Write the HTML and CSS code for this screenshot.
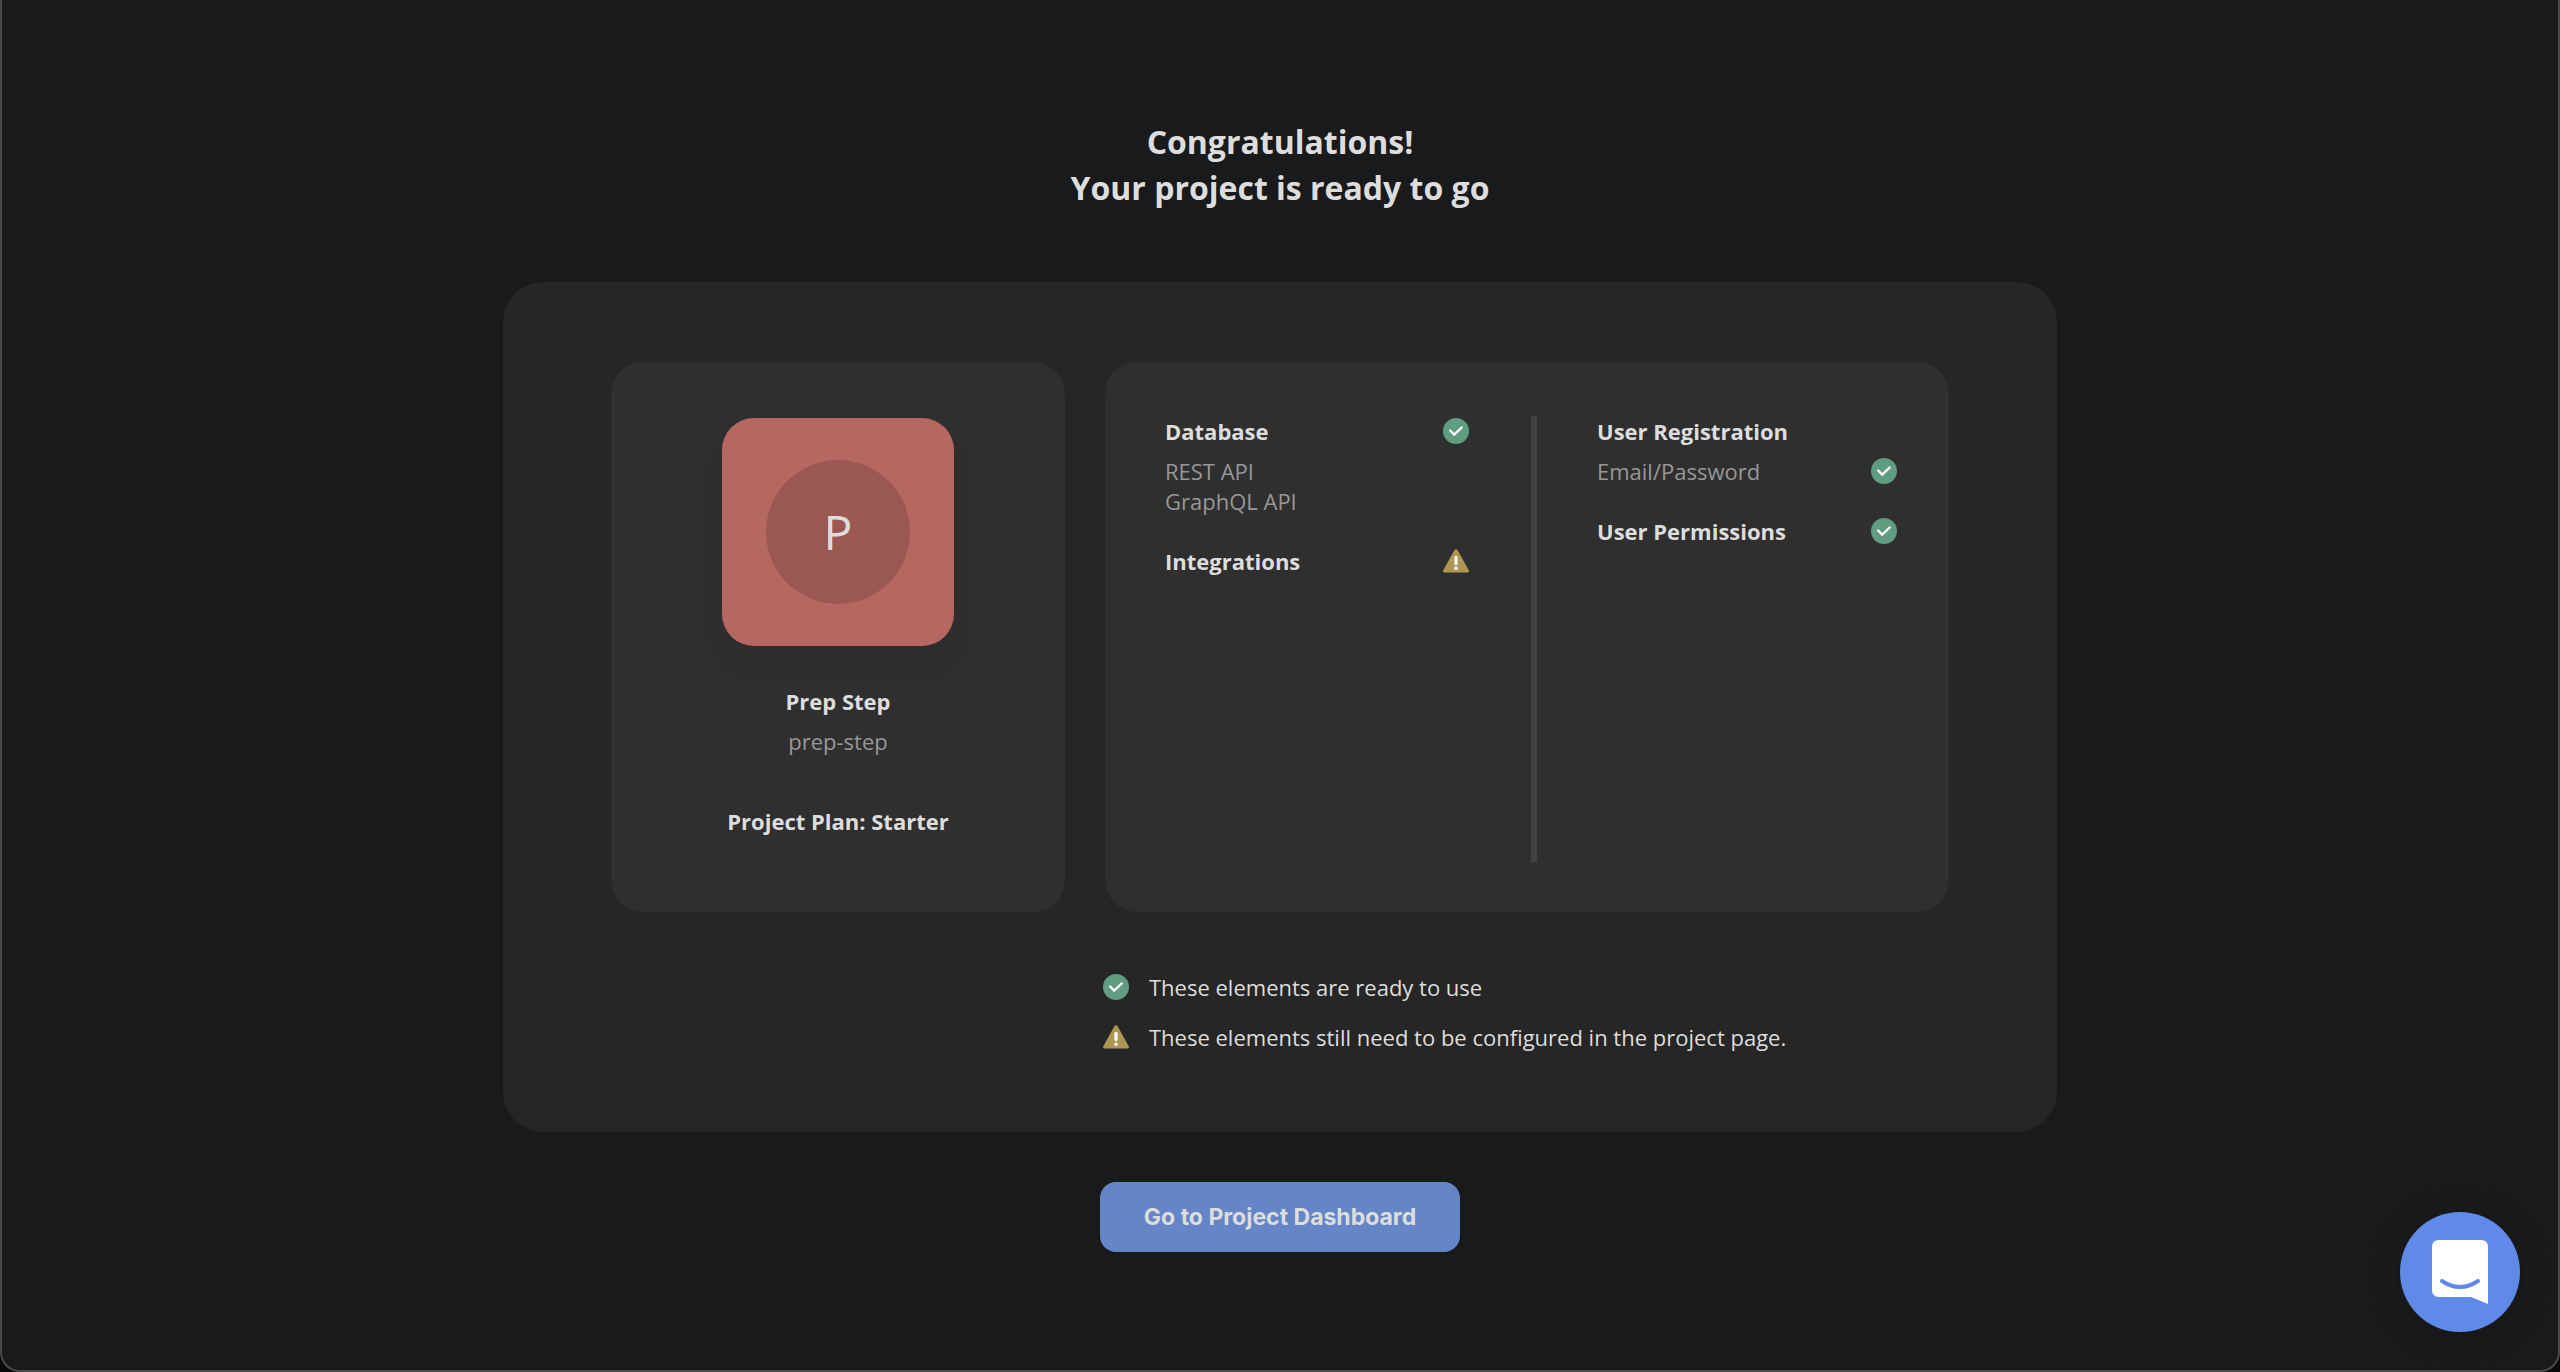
FILE: index.html
```html
<!DOCTYPE html>
<html lang="en">
<head>
  <meta charset="utf-8">
  <meta name="viewport" content="width=device-width, initial-scale=1">
  <title>Project ready</title>
  <link rel="stylesheet" href="styles.css">
</head>
<body>
  <svg class="sprite" aria-hidden="true">
    <symbol id="icon-ready" viewBox="0 0 26 26">
      <circle cx="13" cy="13" r="13" fill="#609d80"/>
      <path d="M7.2 12.4 11.2 16.6 18.8 9.4" fill="none" stroke="#fff" stroke-width="2.2" stroke-linecap="round" stroke-linejoin="miter"/>
    </symbol>
    <symbol id="icon-pending" viewBox="0 0 26 26">
      <path d="M11.5 2.1Q13 .3 14.5 2.1L25.7 22.2Q26.4 24.3 24.4 24.5H1.6Q-.4 24.3.3 22.2Z" fill="#b09653"/>
      <path d="M13 9.3V15.6" stroke="#fff" stroke-width="3.2" stroke-linecap="round"/>
      <circle cx="13" cy="20.3" r="1.7" fill="#fff"/>
    </symbol>
  </svg>

  <div class="window">
    <main class="page">
      <h1 class="title">Congratulations!<br>Your project is ready to go</h1>

      <section class="summary">
        <div class="cards">
          <article class="card project">
            <div class="avatar"><span class="avatar-letter">P</span></div>
            <h2 class="label">Prep Step</h2>
            <p class="detail">prep-step</p>
            <p class="label plan">Project Plan: Starter</p>
          </article>

          <article class="card features">
            <div class="column">
              <div class="feature">
                <div class="row">
                  <h2 class="label">Database</h2>
                  <svg class="icon" role="img" aria-label="Ready"><use href="#icon-ready"/></svg>
                </div>
                <p class="detail">REST API</p>
                <p class="detail next">GraphQL API</p>
              </div>
              <div class="feature">
                <div class="row">
                  <h2 class="label">Integrations</h2>
                  <svg class="icon" role="img" aria-label="Not configured"><use href="#icon-pending"/></svg>
                </div>
              </div>
            </div>
            <div class="column">
              <div class="feature">
                <h2 class="label">User Registration</h2>
                <div class="row detail">
                  <p>Email/Password</p>
                  <svg class="icon" role="img" aria-label="Ready"><use href="#icon-ready"/></svg>
                </div>
              </div>
              <div class="feature">
                <div class="row">
                  <h2 class="label">User Permissions</h2>
                  <svg class="icon" role="img" aria-label="Ready"><use href="#icon-ready"/></svg>
                </div>
              </div>
            </div>
          </article>

          <ul class="legend">
            <li class="legend-item">
              <svg class="icon" aria-hidden="true"><use href="#icon-ready"/></svg>
              <span>These elements are ready to use</span>
            </li>
            <li class="legend-item">
              <svg class="icon" aria-hidden="true"><use href="#icon-pending"/></svg>
              <span>These elements still need to be configured in the project page.</span>
            </li>
          </ul>
        </div>
      </section>

      <button class="primary" type="button">Go to Project Dashboard</button>
    </main>
  </div>

  <button class="chat" type="button" aria-label="Open chat">
    <svg class="chat-icon" viewBox="0 0 56 64" aria-hidden="true">
      <path d="M7 0H49Q56 0 56 7V64L39 57H7Q0 57 0 50V7Q0 0 7 0Z" fill="#fff"/>
      <path d="M10 41Q28 53 46 41" fill="none" stroke="#5f8ae8" stroke-width="4" stroke-linecap="round"/>
    </svg>
  </button>
</body>
</html>
```

FILE: styles.css
```css
* {
  box-sizing: border-box;
}

body {
  margin: 0;
  background: #0b0a09;
  color: #dddddd;
  font-family: "Open Sans", "Noto Sans", sans-serif;
  font-size: 22px;
  line-height: 30px;
}

h1,
h2,
p,
ul {
  margin: 0;
  padding: 0;
}

.sprite {
  display: none;
}

.window {
  min-height: 100vh;
  border: 2px solid #4a4a4a;
  border-top: 0;
  border-radius: 0 0 20px 20px;
  background: #191a1b;
}

.page {
  display: flex;
  flex-direction: column;
  align-items: center;
  padding: 119px 40px 80px;
}

.title {
  font-size: 32px;
  font-weight: 700;
  line-height: 46px;
  text-align: center;
}

.summary {
  width: 100%;
  max-width: 1554px;
  margin-top: 71px;
  padding: 80px 108px;
  border-radius: 40px;
  background: #262626;
}

.cards {
  display: grid;
  grid-template-columns: 454fr 844fr;
  column-gap: 40px;
  row-gap: 60px;
}

.card {
  min-height: 550px;
  border-radius: 32px;
  background: #2f2f2f;
}

.label {
  font-size: 22px;
  font-weight: 700;
}

.detail {
  margin-top: 10px;
  color: #979797;
}

.detail.next {
  margin-top: 0;
}

.project {
  display: flex;
  flex-direction: column;
  align-items: center;
  padding: 56px 40px;
  text-align: center;
}

.avatar {
  display: grid;
  place-items: center;
  width: 232px;
  height: 228px;
  margin-bottom: 40px;
  border-radius: 32px;
  background: #b76761;
  box-shadow: 0 20px 30px rgba(0, 0, 0, 0.04);
}

.avatar-letter {
  width: 144px;
  height: 144px;
  border-radius: 50%;
  background: #9b5852;
  font-size: 48px;
  line-height: 144px;
}

.plan {
  margin-top: 50px;
}

.features {
  display: grid;
  grid-template-columns: 426fr 418fr;
  padding: 54px 0 50px;
}

.column {
  padding: 0 62px 0 60px;
}

.column + .column {
  padding-right: 52px;
  border-left: 6px solid #424242;
}

.feature + .feature {
  margin-top: 30px;
}

.row {
  display: flex;
  align-items: center;
  justify-content: space-between;
}

.icon {
  flex: none;
  width: 26px;
  height: 26px;
}

.legend {
  grid-column: 2;
  display: grid;
  gap: 20px;
  margin-left: -2px;
  list-style: none;
}

.legend-item {
  display: flex;
  align-items: center;
  gap: 20px;
}

.primary {
  min-width: 360px;
  height: 70px;
  margin-top: 50px;
  padding: 0 40px;
  border: 0;
  border-radius: 16px;
  background: #6485c6;
  color: #dddddd;
  font-family: Inter, sans-serif;
  font-size: 23px;
  font-weight: 700;
}

.chat {
  position: fixed;
  right: 40px;
  bottom: 40px;
  display: grid;
  place-items: center;
  width: 120px;
  height: 120px;
  padding: 0;
  border: 0;
  border-radius: 50%;
  background: #5f8ae8;
  box-shadow: 0 4px 40px rgba(0, 0, 0, 0.12);
}

.chat-icon {
  width: 56px;
  height: 64px;
}
```
